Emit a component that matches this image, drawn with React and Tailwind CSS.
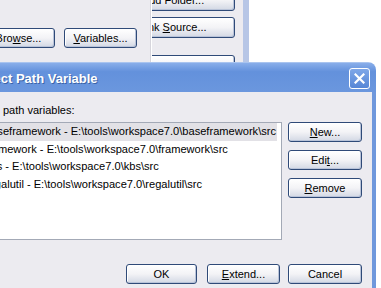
import React from "react";

function XPButton({ children, className = "" }) {
	return (
		<div
			className={`flex h-[20px] shrink-0 items-center justify-center rounded-[3px] border border-[#2f4a78] bg-linear-to-b from-white via-[#f3f3f6] to-[#d3d8e4] text-[11px] leading-[13px] text-black shadow-[inset_-1px_-1px_0_#b9c3d8,inset_1px_1px_0_#ffffff] ${className}`}
		>
			<span className="whitespace-nowrap">{children}</span>
		</div>
	);
}

const rows = [
	"baseframework - E:\\tools\\workspace7.0\\baseframework\\src",
	"framework - E:\\tools\\workspace7.0\\framework\\src",
	"kbs - E:\\tools\\workspace7.0\\kbs\\src",
	"regalutil - E:\\tools\\workspace7.0\\regalutil\\src",
];

export default function App() {
	return (
		<div className="relative h-[288px] w-[381px] overflow-hidden bg-white font-['Liberation_Sans',Arial,sans-serif] text-[11px] text-black">
			{/* BACKGROUND WINDOW */}
			<div className="flex h-[62px]">
				<div className="flex w-[243px] bg-[#ecebf0]">
					{/* left buttons */}
					<div className="flex w-[150px] gap-[9px] overflow-hidden pt-[28px]">
						<XPButton className="-ml-[18px] w-[73px]">
							Bro<span className="underline">w</span>se...
						</XPButton>
						<XPButton className="w-[73px]">
							<span className="underline">V</span>ariables...
						</XPButton>
					</div>
					<div className="w-[2px] border-l border-[#d6d5dc] bg-white" />
					{/* right column, clipped */}
					<div className="flex w-[91px] flex-col overflow-hidden">
						<XPButton className="-mt-[10px] -ml-[41px] h-[21px] w-[124px]">
							Add Folder...
						</XPButton>
						<XPButton className="mt-[6px] -ml-[41px] h-[21px] w-[124px]">
							Link <span className="underline">S</span>ource...
						</XPButton>
						<XPButton className="mt-[17px] -ml-[41px] h-[21px] w-[124px] items-start pt-[4px]">
							Edit...
						</XPButton>
					</div>
				</div>
				<div className="w-[6px] bg-[#b7c6e6]" />
				<div className="flex-1 bg-white" />
			</div>

			{/* DIALOG */}
			<div className="absolute left-[-40px] top-[62px] flex h-[240px] w-[416px] flex-col overflow-hidden rounded-tr-[8px]">
				{/* title bar */}
				<div className="flex h-[30px] shrink-0 items-center border-t border-[#a9c4ef] bg-linear-to-b from-[#89aeea] via-[#6391dc] via-30% to-[#6b97de] pl-[14px] pr-[6px]">
					<span className="flex-1 pt-[3px] text-[13px] font-bold text-white [text-shadow:1px_1px_0_#3c64a8]">
						Select Path Variable
					</span>
					<div className="mt-[2px] flex h-[21px] w-[21px] items-center justify-center rounded-[3px] border border-white bg-linear-to-b from-[#7fa7e8] to-[#5686d6]">
						<svg width="11" height="11" viewBox="0 0 11 11">
							<path
								d="M1.5 1.5 L9.5 9.5 M9.5 1.5 L1.5 9.5"
								stroke="white"
								strokeWidth="2.2"
								strokeLinecap="square"
							/>
						</svg>
					</div>
				</div>

				{/* client area */}
				<div className="flex flex-1 flex-col border-r-[4px] border-[#6f98dc] bg-[#ecebf0] pl-[2px] pr-[6px]">
					<div className="mt-[12px] h-[13px] leading-[13px]">Defined path variables:</div>

					<div className="mt-[5px] flex">
						<div className="h-[118px] w-[320px] shrink-0 overflow-hidden border border-[#a3a9b6] bg-white">
							{rows.map((row, idx) => (
								<div
									key={idx}
									className={`flex h-[17.5px] items-center whitespace-nowrap pl-[22px] text-[11.1px] ${
										idx === 0 ? "mr-[4px] bg-[#e2e1e6]" : ""
									}`}
								>
									{row}
								</div>
							))}
						</div>

						<div className="ml-[6px] flex flex-col gap-[8px]">
							<XPButton className="w-[74px]">
								<span className="underline">N</span>ew...
							</XPButton>
							<XPButton className="w-[74px]">
								Edi<span className="underline">t</span>...
							</XPButton>
							<XPButton className="w-[74px]">
								<span className="underline">R</span>emove
							</XPButton>
						</div>
					</div>

					<div className="mt-[24px] flex justify-end pr-[4px]">
						<XPButton className="w-[71px]">OK</XPButton>
						<XPButton className="ml-[10px] w-[73px]">
							<span className="underline">E</span>xtend...
						</XPButton>
						<XPButton className="ml-[8px] w-[74px]">Cancel</XPButton>
					</div>
				</div>
			</div>
		</div>
	);
}
